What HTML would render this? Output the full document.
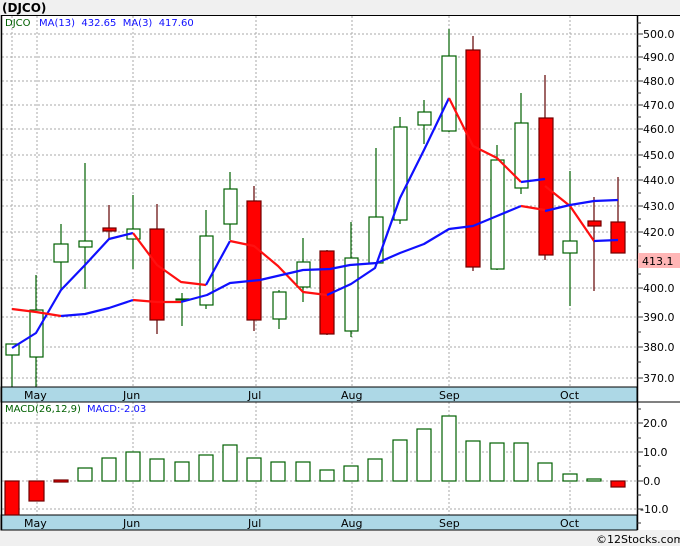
<!DOCTYPE html>
<html><head><style>
body{margin:0;background:#f0f0f0;}
svg{display:block;font-family:"DejaVu Sans","Liberation Sans",sans-serif;}
</style></head><body>
<svg width="680" height="546" viewBox="0 0 680 546" xmlns="http://www.w3.org/2000/svg">
<rect x="0" y="0" width="680" height="546" fill="#f0f0f0"/>
<rect x="1" y="15" width="679" height="515" fill="#fff"/>
<text x="2" y="12" font-size="12" font-weight="bold" fill="#000">(DJCO)</text>
<g stroke="#aaa" stroke-width="1" stroke-dasharray="2,2">
<line x1="2" x2="637" y1="34" y2="34"/><line x1="2" x2="637" y1="57" y2="57"/><line x1="2" x2="637" y1="81" y2="81"/><line x1="2" x2="637" y1="105" y2="105"/><line x1="2" x2="637" y1="129" y2="129"/><line x1="2" x2="637" y1="155" y2="155"/><line x1="2" x2="637" y1="180" y2="180"/><line x1="2" x2="637" y1="206" y2="206"/><line x1="2" x2="637" y1="232" y2="232"/><line x1="2" x2="637" y1="260" y2="260"/><line x1="2" x2="637" y1="288" y2="288"/><line x1="2" x2="637" y1="317" y2="317"/><line x1="2" x2="637" y1="347" y2="347"/><line x1="2" x2="637" y1="378" y2="378"/>
<line x1="2" x2="637" y1="423" y2="423"/><line x1="2" x2="637" y1="452" y2="452"/><line x1="2" x2="637" y1="481" y2="481"/><line x1="2" x2="637" y1="509" y2="509"/>
<line x1="12" x2="12" y1="16" y2="387"/><line x1="37" x2="37" y1="16" y2="387"/><line x1="133" x2="133" y1="16" y2="387"/><line x1="256" x2="256" y1="16" y2="387"/><line x1="352" x2="352" y1="16" y2="387"/><line x1="449" x2="449" y1="16" y2="387"/><line x1="570" x2="570" y1="16" y2="387"/>
<line x1="37" x2="37" y1="402" y2="515"/><line x1="133" x2="133" y1="402" y2="515"/><line x1="256" x2="256" y1="402" y2="515"/><line x1="352" x2="352" y1="402" y2="515"/><line x1="449" x2="449" y1="402" y2="515"/><line x1="570" x2="570" y1="402" y2="515"/>
</g>
<text x="5" y="26" font-size="10" fill="#006000">DJCO</text>
<text x="39" y="26" font-size="10" fill="#1010ff" xml:space="preserve">MA(13)  432.65  MA(3)  417.60</text>
<g stroke-width="1.2">
<g stroke="#006000">
<line x1="12" x2="12" y1="352" y2="387"/><line x1="36" x2="36" y1="275" y2="387"/><line x1="61" x2="61" y1="224" y2="290"/><line x1="85" x2="85" y1="163" y2="289"/><line x1="133" x2="133" y1="195" y2="269"/><line x1="182" x2="182" y1="293" y2="326"/><line x1="206" x2="206" y1="210" y2="309"/><line x1="230" x2="230" y1="172" y2="240"/><line x1="279" x2="279" y1="290" y2="329"/><line x1="303" x2="303" y1="238" y2="302"/><line x1="351" x2="351" y1="222" y2="337"/><line x1="376" x2="376" y1="148" y2="265"/><line x1="400" x2="400" y1="117" y2="224"/><line x1="424" x2="424" y1="100" y2="144"/><line x1="449" x2="449" y1="29" y2="132"/><line x1="497" x2="497" y1="145" y2="270"/><line x1="521" x2="521" y1="93" y2="194"/><line x1="570" x2="570" y1="171" y2="306"/>
</g>
<g stroke="#600000">
<line x1="109" x2="109" y1="205" y2="240"/><line x1="157" x2="157" y1="204" y2="334"/><line x1="254" x2="254" y1="186" y2="331"/><line x1="327" x2="327" y1="250" y2="335"/><line x1="473" x2="473" y1="36" y2="271"/><line x1="545" x2="545" y1="75" y2="260"/><line x1="594" x2="594" y1="197" y2="291"/><line x1="618" x2="618" y1="177" y2="253"/>
</g>
</g>
<g fill="#fff" stroke="#006000" stroke-width="1.2">
<rect x="6" y="344" width="13" height="11"/><rect x="30" y="310" width="13" height="47"/><rect x="54" y="244" width="14" height="18"/><rect x="79" y="241" width="13" height="6"/><rect x="127" y="229" width="13" height="10"/><rect x="176" y="299" width="13" height="1"/><rect x="200" y="236" width="13" height="69"/><rect x="224" y="189" width="13" height="35"/><rect x="273" y="292" width="13" height="27"/><rect x="297" y="262" width="13" height="25"/><rect x="345" y="258" width="13" height="73"/><rect x="369" y="217" width="14" height="46"/><rect x="394" y="127" width="13" height="93"/><rect x="418" y="112" width="13" height="13"/><rect x="442" y="56" width="14" height="75"/><rect x="491" y="160" width="13" height="109"/><rect x="515" y="123" width="13" height="65"/><rect x="563" y="241" width="14" height="12"/>
</g>
<g fill="#ff0000" stroke="#700000" stroke-width="1.2">
<rect x="103" y="228" width="13" height="3"/><rect x="150" y="229" width="14" height="91"/><rect x="247" y="201" width="14" height="119"/><rect x="320" y="251" width="14" height="83"/><rect x="466" y="50" width="14" height="217"/><rect x="539" y="118" width="14" height="137"/><rect x="588" y="221" width="13" height="5"/><rect x="611" y="222" width="14" height="31"/>
</g>
<g fill="none" stroke-width="2.2" stroke-linejoin="round">
<polyline stroke="#1010ff" points="12,348 36,333 61,290 85,265 109,239 133,233"/>
<polyline stroke="#ff1010" points="133,233 157,265 181,282 206,285"/>
<polyline stroke="#1010ff" points="206,285 230,241"/>
<polyline stroke="#ff1010" points="230,241 254,246 278,266 303,292 327,295"/>
<polyline stroke="#1010ff" points="327,295 351,284 375,268 400,198 424,150 449,98"/>
<polyline stroke="#ff1010" points="449,98 473,146 497,158 521,182"/>
<polyline stroke="#1010ff" points="521,182 545,179"/>
<polyline stroke="#ff1010" points="545,186 570,206 594,241"/>
<polyline stroke="#1010ff" points="594,241 618,240"/>
<polyline stroke="#ff1010" points="12,309 36,312 61,316"/>
<polyline stroke="#1010ff" points="61,316 85,314 109,308 133,300"/>
<polyline stroke="#ff1010" points="133,300 157,302 181,302"/>
<polyline stroke="#1010ff" points="181,302 207,295 230,283 260,280 303,270 330,269 350,265 377,263 400,253 424,244 449,229 473,226 497,216 521,206"/>
<polyline stroke="#ff1010" points="521,206 545,210"/>
<polyline stroke="#1010ff" points="545,211 570,205 594,201 618,200"/>
</g>
<rect x="1" y="387" width="636" height="15" fill="#add8e6" stroke="#000" stroke-width="1"/>
<rect x="1" y="515" width="636" height="15" fill="#add8e6" stroke="#000" stroke-width="1"/>
<g font-size="11" fill="#000">
<text x="24" y="399">May</text><text x="123" y="399">Jun</text><text x="248" y="399">Jul</text><text x="341" y="399">Aug</text><text x="439" y="399">Sep</text><text x="560" y="399">Oct</text>
<text x="24" y="527">May</text><text x="123" y="527">Jun</text><text x="248" y="527">Jul</text><text x="341" y="527">Aug</text><text x="439" y="527">Sep</text><text x="560" y="527">Oct</text>
</g>
<text x="5" y="412" font-size="10" fill="#006000">MACD(26,12,9)</text>
<text x="87" y="412" font-size="10" fill="#1010ff">MACD:-2.03</text>
<g fill="#fff" stroke="#006000" stroke-width="1.2">
<rect x="78" y="468" width="14" height="13"/><rect x="102" y="458" width="14" height="23"/><rect x="126" y="452" width="14" height="29"/><rect x="150" y="459" width="14" height="22"/><rect x="175" y="462" width="14" height="19"/><rect x="199" y="455" width="14" height="26"/><rect x="223" y="445" width="14" height="36"/><rect x="247" y="458" width="14" height="23"/><rect x="271" y="462" width="14" height="19"/><rect x="296" y="462" width="14" height="19"/><rect x="320" y="470" width="14" height="11"/><rect x="344" y="466" width="14" height="15"/><rect x="368" y="459" width="14" height="22"/><rect x="393" y="440" width="14" height="41"/><rect x="417" y="429" width="14" height="52"/><rect x="442" y="416" width="14" height="65"/><rect x="466" y="441" width="14" height="40"/><rect x="490" y="443" width="14" height="38"/><rect x="514" y="443" width="14" height="38"/><rect x="538" y="463" width="14" height="18"/><rect x="563" y="474" width="14" height="7"/><rect x="587" y="479" width="14" height="2"/>
</g>
<g fill="#ff0000" stroke="#700000" stroke-width="1.2">
<rect x="5" y="481" width="14" height="34"/><rect x="29" y="481" width="15" height="20"/><rect x="54" y="480" width="14" height="2"/><rect x="611" y="481" width="14" height="6"/>
</g>
<line x1="1.5" y1="15" x2="1.5" y2="530" stroke="#000" stroke-width="1.5"/>
<line x1="1" y1="15.5" x2="680" y2="15.5" stroke="#000"/>
<line x1="637.5" y1="15" x2="637.5" y2="530" stroke="#000" stroke-width="1.5"/>
<line x1="637" y1="402" x2="680" y2="402" stroke="#000"/>
<g stroke="#333">
<line x1="637" x2="643" y1="34" y2="34"/><line x1="637" x2="643" y1="57" y2="57"/><line x1="637" x2="643" y1="81" y2="81"/><line x1="637" x2="643" y1="105" y2="105"/><line x1="637" x2="643" y1="129" y2="129"/><line x1="637" x2="643" y1="155" y2="155"/><line x1="637" x2="643" y1="180" y2="180"/><line x1="637" x2="643" y1="206" y2="206"/><line x1="637" x2="643" y1="232" y2="232"/><line x1="637" x2="643" y1="260" y2="260"/><line x1="637" x2="643" y1="288" y2="288"/><line x1="637" x2="643" y1="317" y2="317"/><line x1="637" x2="643" y1="347" y2="347"/><line x1="637" x2="643" y1="378" y2="378"/>
<line x1="637" x2="641" y1="23" y2="23"/><line x1="637" x2="641" y1="46" y2="46"/><line x1="637" x2="641" y1="69" y2="69"/><line x1="637" x2="641" y1="93" y2="93"/><line x1="637" x2="641" y1="117" y2="117"/><line x1="637" x2="641" y1="142" y2="142"/><line x1="637" x2="641" y1="167" y2="167"/><line x1="637" x2="641" y1="193" y2="193"/><line x1="637" x2="641" y1="219" y2="219"/><line x1="637" x2="641" y1="246" y2="246"/><line x1="637" x2="641" y1="274" y2="274"/><line x1="637" x2="641" y1="302" y2="302"/><line x1="637" x2="641" y1="332" y2="332"/><line x1="637" x2="641" y1="362" y2="362"/>
<line x1="637" x2="643" y1="423" y2="423"/><line x1="637" x2="643" y1="452" y2="452"/><line x1="637" x2="643" y1="481" y2="481"/><line x1="637" x2="643" y1="509" y2="509"/>
<line x1="637" x2="641" y1="409" y2="409"/><line x1="637" x2="641" y1="438" y2="438"/><line x1="637" x2="641" y1="466" y2="466"/><line x1="637" x2="641" y1="495" y2="495"/><line x1="637" x2="641" y1="523" y2="523"/>
</g>
<g font-size="11" fill="#000">
<text x="643" y="38">500.0</text><text x="643" y="61">490.0</text><text x="643" y="85">480.0</text><text x="643" y="109">470.0</text><text x="643" y="133">460.0</text><text x="643" y="159">450.0</text><text x="643" y="184">440.0</text><text x="643" y="210">430.0</text><text x="643" y="236">420.0</text><text x="643" y="292">400.0</text><text x="643" y="321">390.0</text><text x="643" y="351">380.0</text><text x="643" y="382">370.0</text>
<text x="643" y="427">20.0</text><text x="643" y="456">10.0</text><text x="643" y="485">0.0</text><text x="640" y="513">-10.0</text>
</g>
<rect x="638" y="253" width="42" height="15" fill="#ffb6b6"/>
<text x="642" y="265" font-size="11" fill="#000">413.1</text>
<text x="596" y="543" font-size="11" fill="#000">©12Stocks.com</text>
</svg>
</body></html>
